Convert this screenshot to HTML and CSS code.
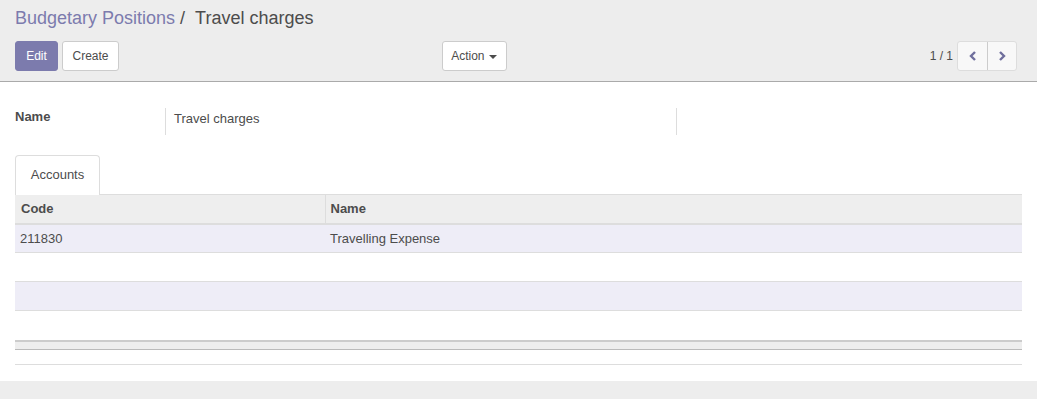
FILE: index.html
```html
<!DOCTYPE html>
<html>
<head>
  <meta charset="utf-8" />
  <title>Travel charges</title>
  <link rel="stylesheet" href="styles.css">
</head>
<body>
<div class="controlPanel">
  <ol class="breadcrumb">
    <li><a href="#">Budgetary Positions</a></li>
    <li class="active">Travel charges</li>
  </ol>
  <div class="cpRow">
    <div class="cpLeft">
      <div class="cpButtons">
        <button class="btn btnPrimary btnEdit">Edit</button>
        <button class="btn btnCreate">Create</button>
      </div>
      <button class="btn btnAction">Action <span class="caret"></span></button>
    </div>
    <div class="cpRight">
      <span class="pagerValue">1 / 1</span>
      <div class="pagerButtons">
        <button class="pagerBtn">
          <svg width="10" height="12" viewBox="0 0 10 12"><polyline points="7,2 3,6 7,10" fill="none" stroke="#6f6e9c" stroke-width="2.4" /></svg>
        </button>
        <button class="pagerBtn">
          <svg width="10" height="12" viewBox="0 0 10 12"><polyline points="3,2 7,6 3,10" fill="none" stroke="#6f6e9c" stroke-width="2.4" /></svg>
        </button>
      </div>
    </div>
  </div>
</div>

<div class="sheet">
  <div class="fieldRow">
    <div class="fieldLabel">Name</div>
    <div class="fieldValue">Travel charges</div>
    <div class="fieldRest"></div>
  </div>

  <ul class="tabs">
    <li class="tab">Accounts</li>
  </ul>

  <table class="listView">
    <thead>
      <tr><th class="colCode">Code</th><th class="colName">Name</th></tr>
    </thead>
    <tbody>
      <tr class="odd"><td>211830</td><td>Travelling Expense</td></tr>
      <tr><td></td><td></td></tr>
      <tr class="odd"><td></td><td></td></tr>
      <tr class="last"><td></td><td></td></tr>
    </tbody>
    <tfoot>
      <tr><td></td><td></td></tr>
    </tfoot>
  </table>
  <div class="listBottom"></div>
</div>
</body>
</html>
```

FILE: styles.css
```css
* { margin: 0; padding: 0; box-sizing: border-box; }
html { background: #ededed; }
body { font-family: "Liberation Sans", Arial, Helvetica, sans-serif; font-size: 13px; color: #4c4c4c; }
a { color: #7c7bad; text-decoration: none; }

.controlPanel { background: #ededed; height: 82px; border-bottom: 1px solid #aaaaaa; padding: 5px 15px 0; }
.breadcrumb { list-style: none; display: flex; font-size: 18px; line-height: 26px; }
.breadcrumb li.active::before { content: "/"; color: #4c4c4c; padding: 0 10px 0 5px; }
.breadcrumb li.active { color: #4c4c4c; }

.cpRow { display: flex; margin-top: 10px; height: 30px; }
.cpLeft { flex: 0 0 50%; display: flex; justify-content: space-between; padding-right: 12px; }
.cpButtons { display: flex; gap: 4px; }
.cpRight { flex: 1; display: flex; justify-content: flex-end; align-items: center; padding-right: 5px; }

.btn { font-family: inherit; font-size: 12px; height: 30px; border-radius: 3px; border: 1px solid #cccccc; background: #ffffff; color: #4c4c4c; cursor: pointer; }
.btnPrimary { background: #7c7bad; border-color: #7c7bad; color: #ffffff; }
.btnEdit { width: 43px; }
.btnCreate { width: 57px; }
.btnAction { width: 65px; }
.caret { display: inline-block; width: 0; height: 0; border-top: 4px solid #4c4c4c; border-left: 4px solid transparent; border-right: 4px solid transparent; vertical-align: middle; margin-left: 1px; }

.pagerValue { font-size: 12px; margin-right: 4px; }
.pagerButtons { display: flex; border: 1px solid #dddddd; border-radius: 3px; background: #f8f8f8; height: 30px; }
.pagerBtn { width: 29px; border: none; background: none; display: flex; align-items: center; justify-content: center; cursor: pointer; }
.pagerBtn + .pagerBtn { border-left: 1px solid #cccccc; }

.sheet { background: #ffffff; height: 299px; padding: 26px 15px 0; }
.fieldRow { display: flex; height: 27px; }
.fieldLabel { width: 150px; font-weight: bold; line-height: 17px; }
.fieldValue { width: 511px; border-left: 1px solid #dddddd; padding: 2px 0 0 8px; line-height: 17px; }
.fieldRest { border-left: 1px solid #dddddd; }

.tabs { list-style: none; display: flex; margin-top: 20px; }
.tab { width: 85px; height: 40px; line-height: 18px; padding: 10px 0; text-align: center; border: 1px solid #dddddd; border-bottom: none; border-radius: 4px 4px 0 0; background: #ffffff; margin-bottom: -1px; position: relative; }

.listView { width: 100%; border-collapse: collapse; border-top: 1px solid #dddddd; }
.listView th { background: #eeeeee; height: 29px; text-align: left; font-weight: bold; padding: 0 6px; border-bottom: 2px solid #dddddd; }
.listView th.colCode { width: 310px; }
.listView th.colName { border-left: 1px solid #dddddd; padding-left: 5px; }
.listView td { height: 29px; padding: 0 5px; border-bottom: 1px solid #dddddd; }
.listView tr.odd td { background: #eeedf7; }
.listView tr.last td { height: 30px; border-bottom: none; }
.listView tfoot td { height: 9px; padding: 0; background: #eeeeee; border-top: 2px solid #cccccc; border-bottom: 1px solid #bbbbbb; }
.listBottom { height: 15px; border-bottom: 1px solid #dddddd; }
```
